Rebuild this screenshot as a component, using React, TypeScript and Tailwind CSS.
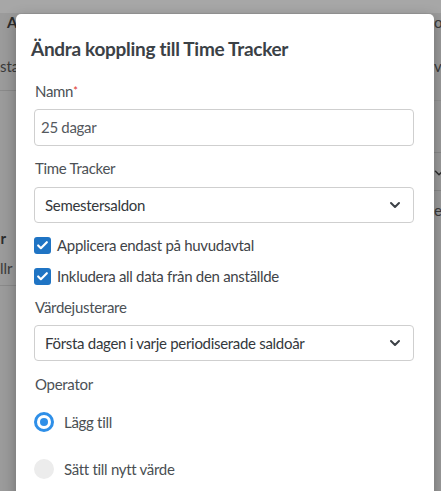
import { ChevronDown, Check } from "lucide-react";

const font = "font-['Lato','Noto_Sans',sans-serif]";

function Select({ value }: { value: string }) {
  return (
    <div className="flex h-[36px] items-center justify-between rounded-[4px] border border-[#cfcfcf] bg-white pl-[10px] pr-[10px]">
      <span className="text-[15px] tracking-[-0.3px] text-[#34383c]">{value}</span>
      <ChevronDown size={16} strokeWidth={3} className="text-[#3c4146]" />
    </div>
  );
}

function CheckRow({ label }: { label: string }) {
  return (
    <div className="flex h-[20px] items-center gap-[6px]">
      <span className="flex h-[17px] w-[17px] items-center justify-center rounded-[3px] bg-[#1f74c4]">
        <Check size={13} strokeWidth={4} className="text-white" />
      </span>
      <span className="text-[15px] tracking-[-0.3px] text-[#3f4448]">{label}</span>
    </div>
  );
}

function RadioRow({ label, checked }: { label: string; checked?: boolean }) {
  return (
    <div className="flex h-[24px] items-center gap-[10px]">
      {checked ? (
        <span className="flex h-[20px] w-[20px] items-center justify-center rounded-full border-[3px] border-[#2e8fe8] bg-white">
          <span className="h-[8px] w-[8px] rounded-full bg-[#2e8fe8]" />
        </span>
      ) : (
        <span className="h-[20px] w-[20px] rounded-full bg-[#ececec]" />
      )}
      <span className="text-[15px] tracking-[-0.3px] text-[#4a4f53]">{label}</span>
    </div>
  );
}

export default function App() {
  return (
    <div className={`relative h-[491px] w-[441px] overflow-hidden bg-[#9b9b9b] ${font}`}>
      {/* Page behind the dialog */}
      <div className="h-[13px] bg-[#a7a7a7]" />
      <div className="flex justify-between">
        <div className="flex w-[16px] flex-col overflow-hidden">
          <div className="-mt-[1px] pl-[7px] text-[15px] font-bold leading-[20px] text-[#2c2c2c]">A</div>
          <div className="mt-[24px] whitespace-nowrap text-[15px] leading-[20px] text-[#3a3a3a]">sta</div>
          <div className="mt-[14px] h-px w-full bg-[#8a8a8a]" />
          <div className="mt-[137px] flex w-[6px] justify-end whitespace-nowrap text-[15px] font-bold leading-[20px] text-[#2c2c2c]">
            r
          </div>
          <div className="mt-[10px] whitespace-nowrap text-[15px] leading-[20px] text-[#3a3a3a]">llr</div>
          <div className="mt-[7px] h-px w-full bg-[#8a8a8a]" />
        </div>
        <div className="flex w-[7px] flex-col overflow-hidden">
          <div className="-mt-[1px] whitespace-nowrap text-[15px] leading-[20px] text-[#3a3a3a]">o</div>
          <div className="mt-[24px] whitespace-nowrap text-[15px] leading-[20px] text-[#3a3a3a]">v</div>
          <div className="mt-[24px] h-px w-full bg-[#929292]" />
          <div className="mt-[51px] h-px w-full bg-[#8a8a8a]" />
          <div className="mt-[13px] whitespace-nowrap text-[15px] leading-[14px] text-[#2c2c2c]">
            <ChevronDown size={14} strokeWidth={2.5} className="-ml-[2px]" />
          </div>
          <div className="mt-[10px] h-px w-full bg-[#8a8a8a]" />
          <div className="mt-[9px] whitespace-nowrap text-[15px] leading-[20px] text-[#3a3a3a]">er</div>
        </div>
      </div>

      {/* Dialog */}
      <div className="absolute left-[16px] top-[14px] h-[520px] w-[418px] rounded-t-[5px] bg-white pl-[18px] pr-[20px] pt-[21px] shadow-[0_4px_14px_rgba(0,0,0,0.3)]">
        <h2 className="-ml-[3px] text-[19px] font-bold leading-[28px] tracking-[-0.3px] text-[#3b4146]">
          Ändra koppling till Time Tracker
        </h2>

        <div className="mt-[18px] pl-px text-[15px] leading-[20px] tracking-[-0.3px] text-[#4c5156]">
          Namn<span className="align-top text-[11px] text-[#e0352b]">*</span>
        </div>
        <div className="mt-[8px] flex h-[37px] items-center rounded-[4px] border border-[#cfcfcf] pl-[6px]">
          <span className="text-[15px] tracking-[-0.3px] text-[#55595e]">25 dagar</span>
        </div>

        <div className="mt-[12px] pl-px text-[15px] leading-[20px] tracking-[-0.3px] text-[#4c5156]">Time Tracker</div>
        <div className="mt-[9px]">
          <Select value="Semestersaldon" />
        </div>

        <div className="mt-[12px]">
          <CheckRow label="Applicera endast på huvudavtal" />
        </div>
        <div className="mt-[11px]">
          <CheckRow label="Inkludera all data från den anställde" />
        </div>

        <div className="mt-[11px] pl-px text-[15px] leading-[20px] tracking-[-0.3px] text-[#4c5156]">Värdejusterare</div>
        <div className="mt-[8px]">
          <Select value="Första dagen i varje periodiserade saldoår" />
        </div>

        <div className="mt-[13px] pl-px text-[15px] leading-[20px] tracking-[-0.3px] text-[#4c5156]">Operator</div>
        <div className="mt-[16px]">
          <RadioRow label="Lägg till" checked />
        </div>
        <div className="mt-[23px]">
          <RadioRow label="Sätt till nytt värde" />
        </div>
      </div>
    </div>
  );
}
